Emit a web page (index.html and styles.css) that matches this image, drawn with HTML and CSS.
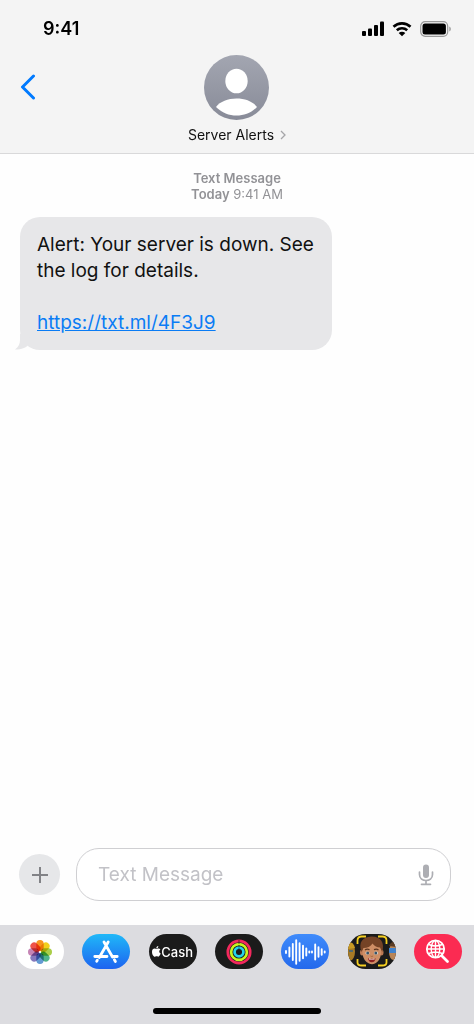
FILE: index.html
```html
<!DOCTYPE html>
<html lang="en">
<head>
<meta charset="UTF-8">
<title>Server Alerts</title>
<meta name="viewport" content="width=device-width, initial-scale=1.0">
<link rel="stylesheet" href="styles.css">
</head>
<body>
<header class="top">
	<div class="status">
		<span class="time">9:41</span>
		<div class="signals">
			<svg width="22" height="16" viewBox="0 0 22 16"><rect x="0" y="10" width="4" height="5" rx="1"/><rect x="6" y="7.500" width="4" height="7.500" rx="1"/><rect x="12" y="4" width="4" height="11" rx="1"/><rect x="18" y="0.500" width="4" height="14.500" rx="1"/></svg>
			<svg width="20" height="16" viewBox="0 0 20 16"><path d="M1.500 5.800C6.200 1.200 13.800 1.200 18.500 5.800M4.800 9.200c2.900-2.700 7.500-2.700 10.400 0" fill="none" stroke="#000" stroke-width="2.600"/><path d="M10 15.200L6.700 12c1.800-1.700 4.800-1.700 6.600 0z"/></svg>
			<svg width="32" height="16" viewBox="0 0 32 16"><rect x="0.700" y="0.700" width="27" height="14.600" rx="4.500" fill="none" stroke="#999" stroke-width="1.200"/><rect x="2.500" y="2.500" width="23.400" height="11" rx="2.500"/><path d="M29.300 5.500c2 .7 2 4.300 0 5z" fill="#999"/></svg>
		</div>
	</div>
	<div class="nav">
		<button class="back" type="button" aria-label="Back">
			<svg width="16" height="26" viewBox="0 0 16 26"><path d="M13.500 2L2.500 13l11 11" fill="none" stroke="#007aff" stroke-width="3" stroke-linecap="round" stroke-linejoin="round"/></svg>
		</button>
		<a class="contact" href="#">
			<svg class="avatar" width="65" height="65" viewBox="0 0 65 65">
				<defs><linearGradient id="av" x1="0" y1="0" x2="0" y2="1"><stop offset="0" stop-color="#a3a6b1"/><stop offset="1" stop-color="#888b98"/></linearGradient></defs>
				<circle cx="32.500" cy="32.500" r="32.500" fill="url(#av)"/>
				<ellipse cx="32.500" cy="26" rx="11.200" ry="12.300" fill="#fff"/>
				<path d="M12 52C16 46.500 24 43.500 32.500 43.500S49 46.500 53 52C47 58 40 60.500 32.500 60.500S18 58 12 52z" fill="#fff"/>
			</svg>
			<span class="name">Server Alerts
				<svg width="6" height="10" viewBox="0 0 6 10"><path d="M1 1l4 4-4 4" fill="none" stroke="#a5a5a8" stroke-width="1.300"/></svg>
			</span>
		</a>
	</div>
</header>

<main class="thread">
	<p class="stamp"><b>Text Message</b><br><b>Today</b> 9:41 AM</p>
	<div class="bubble">
		<svg class="tail" width="16" height="16" viewBox="0 0 16 16"><path d="M5 0v6c0 4-1.500 7-5 9.500 5 .5 9-1 12.500-3.500L16 0z" fill="#e7e7e9"/></svg>
		<p>Alert: Your server is down. See the log for details.</p>
		<p><a href="#">https://txt.ml/4F3J9</a></p>
	</div>
</main>

<form class="compose">
	<button class="plus" type="button" aria-label="Add">
		<svg width="16" height="16" viewBox="0 0 16 16"><path d="M8 0v16M0 8h16" stroke="#818286" stroke-width="2"/></svg>
	</button>
	<div class="field">
		<input type="text" placeholder="Text Message" aria-label="Text Message">
		<button class="mic" type="button" aria-label="Dictate">
			<svg width="16" height="22" viewBox="0 0 16 22"><rect x="5" y="0.500" width="6" height="13.500" rx="3" fill="#adaeb3"/><path d="M1.500 8v2.500c0 8 13 8 13 0V8M8 16.500V20M3.500 20.300h9" fill="none" stroke="#adaeb3" stroke-width="1.700" stroke-linecap="round"/></svg>
		</button>
	</div>
</form>

<footer class="tray">
	<nav class="apps">
		<button class="app photos" type="button" aria-label="Photos">
			<svg width="26" height="26" viewBox="-13 -13 26 26">
				<g class="petals">
					<rect x="-3.700" y="-12" width="7.400" height="11" rx="3.700" fill="#f7941e"/>
					<rect x="-3.700" y="-12" width="7.400" height="11" rx="3.700" fill="#f2cf1d" transform="rotate(45)"/>
					<rect x="-3.700" y="-12" width="7.400" height="11" rx="3.700" fill="#aace48" transform="rotate(90)"/>
					<rect x="-3.700" y="-12" width="7.400" height="11" rx="3.700" fill="#4fb58a" transform="rotate(135)"/>
					<rect x="-3.700" y="-12" width="7.400" height="11" rx="3.700" fill="#649bd3" transform="rotate(180)"/>
					<rect x="-3.700" y="-12" width="7.400" height="11" rx="3.700" fill="#8579bd" transform="rotate(225)"/>
					<rect x="-3.700" y="-12" width="7.400" height="11" rx="3.700" fill="#c585b5" transform="rotate(270)"/>
					<rect x="-3.700" y="-12" width="7.400" height="11" rx="3.700" fill="#ee5248" transform="rotate(315)"/>
				</g>
			</svg>
		</button>
		<button class="app store" type="button" aria-label="App Store">
			<svg width="26" height="24" viewBox="0 0 26 24"><path d="M11 2l8.500 15M15.200 2L6.300 17.500M1.800 16.500H14M19 16.500h5.200M4.300 20.300l-.6 1M21.400 19.800l1 1.700" fill="none" stroke="#fff" stroke-width="2.800" stroke-linecap="round"/></svg>
		</button>
		<button class="app dark" type="button">
			<svg width="9" height="11" viewBox="0 0 9 11"><path d="M6.300 0C6.400 1.300 5.500 2.300 4.300 2.400 4.200 1.200 5.200.2 6.300 0zM4.500 3c.5 0 1-.5 2-.5.800 0 1.500.4 1.900 1C6.600 4.500 6.900 6.900 8.700 7.600 8.200 9 7.300 10.700 6.300 10.700c-.7 0-.9-.4-1.700-.4s-1 .4-1.700.4C1.400 10.700 0 8 0 5.900 0 3.700 1.300 2.600 2.600 2.600c.8 0 1.400.4 1.900.4z" fill="#fff"/></svg><span>Cash</span>
		</button>
		<button class="app dark" type="button" aria-label="Fitness">
			<svg width="26" height="26" viewBox="0 0 26 26" fill="none" stroke-width="2.700"><circle cx="13" cy="13" r="11.200" stroke="#f3285d"/><circle cx="13" cy="13" r="7.900" stroke="#c8f31d"/><circle cx="13" cy="13" r="4.400" stroke="#25d3e8"/><path d="M13 1v4M13 6v2.500M13 9v1.500" stroke="#1b1b1b" stroke-width="0.700"/></svg>
		</button>
		<button class="app audio" type="button" aria-label="Audio">
			<svg width="42" height="26" viewBox="0 0 42 26" stroke="#fff" stroke-width="1.900" stroke-linecap="round"><path d="M2 12v2M5.400 8.500v9M8.800 5v16M12.200 1.200v23.600M15.600 4.200v17.600M19 6.700v12.600M22.300 9.500v7M25.300 12.500v1M28 12.500v1M31.200 5.500v15M34.500 8.300v9.400M37.700 10.300v5.400M40.700 12.500v1"/></svg>
		</button>
		<button class="app dark" type="button" aria-label="Memoji">
			<svg width="48" height="35" viewBox="0 0 48 35">
				<ellipse cx="2.500" cy="17.500" rx="4.500" ry="9" fill="#a67a26"/><path d="M0 9q5-2 7 5l-7 1z" fill="#c99a24"/><path d="M1 17h4" stroke="#536a6e" stroke-width="2"/>
				<ellipse cx="45.500" cy="18" rx="4.500" ry="8" fill="#b98557"/><path d="M41 12q2-5 7-4v5z" fill="#5a3c24"/><rect x="41" y="14" width="7" height="5" fill="#3f82ce"/>
				<path d="M9.500 10V6.500q0-4 4-4H18M30 2.500h4.500q4 0 4 4V10M9.500 25v3.500q0 3 4 3H18M30 31.500h4.500q4 0 4-3V25" fill="none" stroke="#f5cf22" stroke-width="1.800"/>
				<ellipse cx="14" cy="18.500" rx="2" ry="3" fill="#bd7b55"/><ellipse cx="33.500" cy="18.500" rx="2" ry="3" fill="#bd7b55"/>
				<path d="M14.500 11q9-8 18.500 0v9q-1 7-6 9.500-3 1.500-6 0-5.500-2.500-6.500-9.500z" fill="#cf8f66"/>
				<path d="M13.500 18C10 8 15 3 23 2.500c9.500-.5 14 6 11.300 15.500L32 13.500q-4.500 0-7.500-4-3 4.500-9 4.500z" fill="#754326"/>
				<path d="M17 16q2-1.500 4.500-.3M26 15.700q2.500-1.200 4.500.3" fill="none" stroke="#5c351f" stroke-width="1.300"/>
				<ellipse cx="19.500" cy="19" rx="2" ry="1.500" fill="#e9eef0"/><ellipse cx="28" cy="19" rx="2" ry="1.500" fill="#e9eef0"/><circle cx="19.700" cy="19" r="1.500" fill="#3b5364"/><circle cx="27.800" cy="19" r="1.500" fill="#3b5364"/>
				<path d="M22.500 22q1.300 1 2.600 0" fill="none" stroke="#a7653f"/><path d="M20 24.300q3.800 1 7.600 0-.5 4-3.800 4T20 24.300z" fill="#8e2020"/><path d="M21 24.600q2.800.8 5.600 0v.8H21z" fill="#fff"/>
			</svg>
		</button>
		<button class="app search" type="button" aria-label="Images">
			<svg width="25" height="25" viewBox="0 0 25 25" fill="none" stroke="#fff"><circle cx="10.500" cy="10" r="8.700" stroke-width="1.800"/><path d="M10.500 1.500v17M2 10h17M3.700 5.500q6.800 3 13.600 0M3.700 14.500q6.800-3 13.600 0" stroke-width="1.400"/><ellipse cx="10.500" cy="10" rx="4.300" ry="8.500" stroke-width="1.400"/><path d="M17 17l5.500 5.500" stroke-width="2.800" stroke-linecap="round"/></svg>
		</button>
	</nav>
	<div class="home"></div>
</footer>
</body>
</html>
```
FILE: styles.css
```css
*{margin:0;padding:0;box-sizing:border-box;}
body{display:flex;flex-direction:column;min-height:100vh;background:#fefefe;color:#111;font-family:Inter,"Liberation Sans",sans-serif;}
button{border:0;background:none;font-family:inherit;cursor:pointer;}
svg{display:block;flex:none;}
a{text-decoration:none;}

/* header */
.top{background:#f4f4f4;border-bottom:1px solid #d9d9da;padding-bottom:9px;}
.status{display:flex;justify-content:space-between;align-items:center;height:55px;padding:2px 22px 0 43px;}
.time{font-size:18px;font-weight:600;line-height:24px;color:#000;}
.signals{display:flex;gap:8px;}
.nav{display:grid;grid-template-columns:1fr auto 1fr;align-items:start;}
.back{justify-self:start;padding:19px 20px;}
.contact{display:flex;flex-direction:column;align-items:center;gap:6px;color:#111;}
.name{display:flex;align-items:center;gap:6px;font-size:14px;line-height:18px;}

/* messages */
.thread{flex:1;padding:16px 20px;}
.stamp{text-align:center;font-size:13px;line-height:16px;color:#929296;}
.stamp b{font-weight:600;}
.bubble{position:relative;max-width:72%;margin-top:15px;padding:15px 17px 14px;border-radius:20px;background:#e7e7e9;font-size:19px;line-height:26px;}
.bubble p + p{margin-top:26px;}
.bubble a{color:#0a7cf5;text-decoration:underline;}
.tail{position:absolute;left:-5px;bottom:0;}

/* input row */
.compose{display:flex;align-items:center;gap:16px;padding:0 23px 24px 19px;}
.plus{display:flex;flex:none;align-items:center;justify-content:center;width:41px;height:41px;border-radius:50%;background:#e6e7e9;}
.field{display:flex;flex:1;align-items:center;height:53px;padding:0 16px 0 21px;border:1px solid #cfcfd2;border-radius:23px;background:#fff;}
.field input{flex:1;min-width:0;border:0;outline:0;background:none;font-family:inherit;font-size:19px;line-height:26px;}
.field input::placeholder{color:#c2c2c7;opacity:1;}

/* app strip */
.tray{background:#dcdce0;padding:9px 0 10px;}
.apps{display:flex;justify-content:space-between;padding:0 12px 0 16px;}
.app{display:flex;align-items:center;justify-content:center;width:48px;height:35px;border-radius:18px;overflow:hidden;color:#fff;font-size:13px;font-weight:500;line-height:16px;}
.photos{background:#fff;}
.petals rect{mix-blend-mode:multiply;}
.store{background:linear-gradient(#20b8f8,#1d63f0);}
.dark{background:#1b1b1b;}
.audio{background:linear-gradient(#3f8bfb,#2469ec);}
.search{background:#fb2b52;}
.home{width:168px;height:6px;margin:39px auto 0;border-radius:3px;background:#000;}
```
